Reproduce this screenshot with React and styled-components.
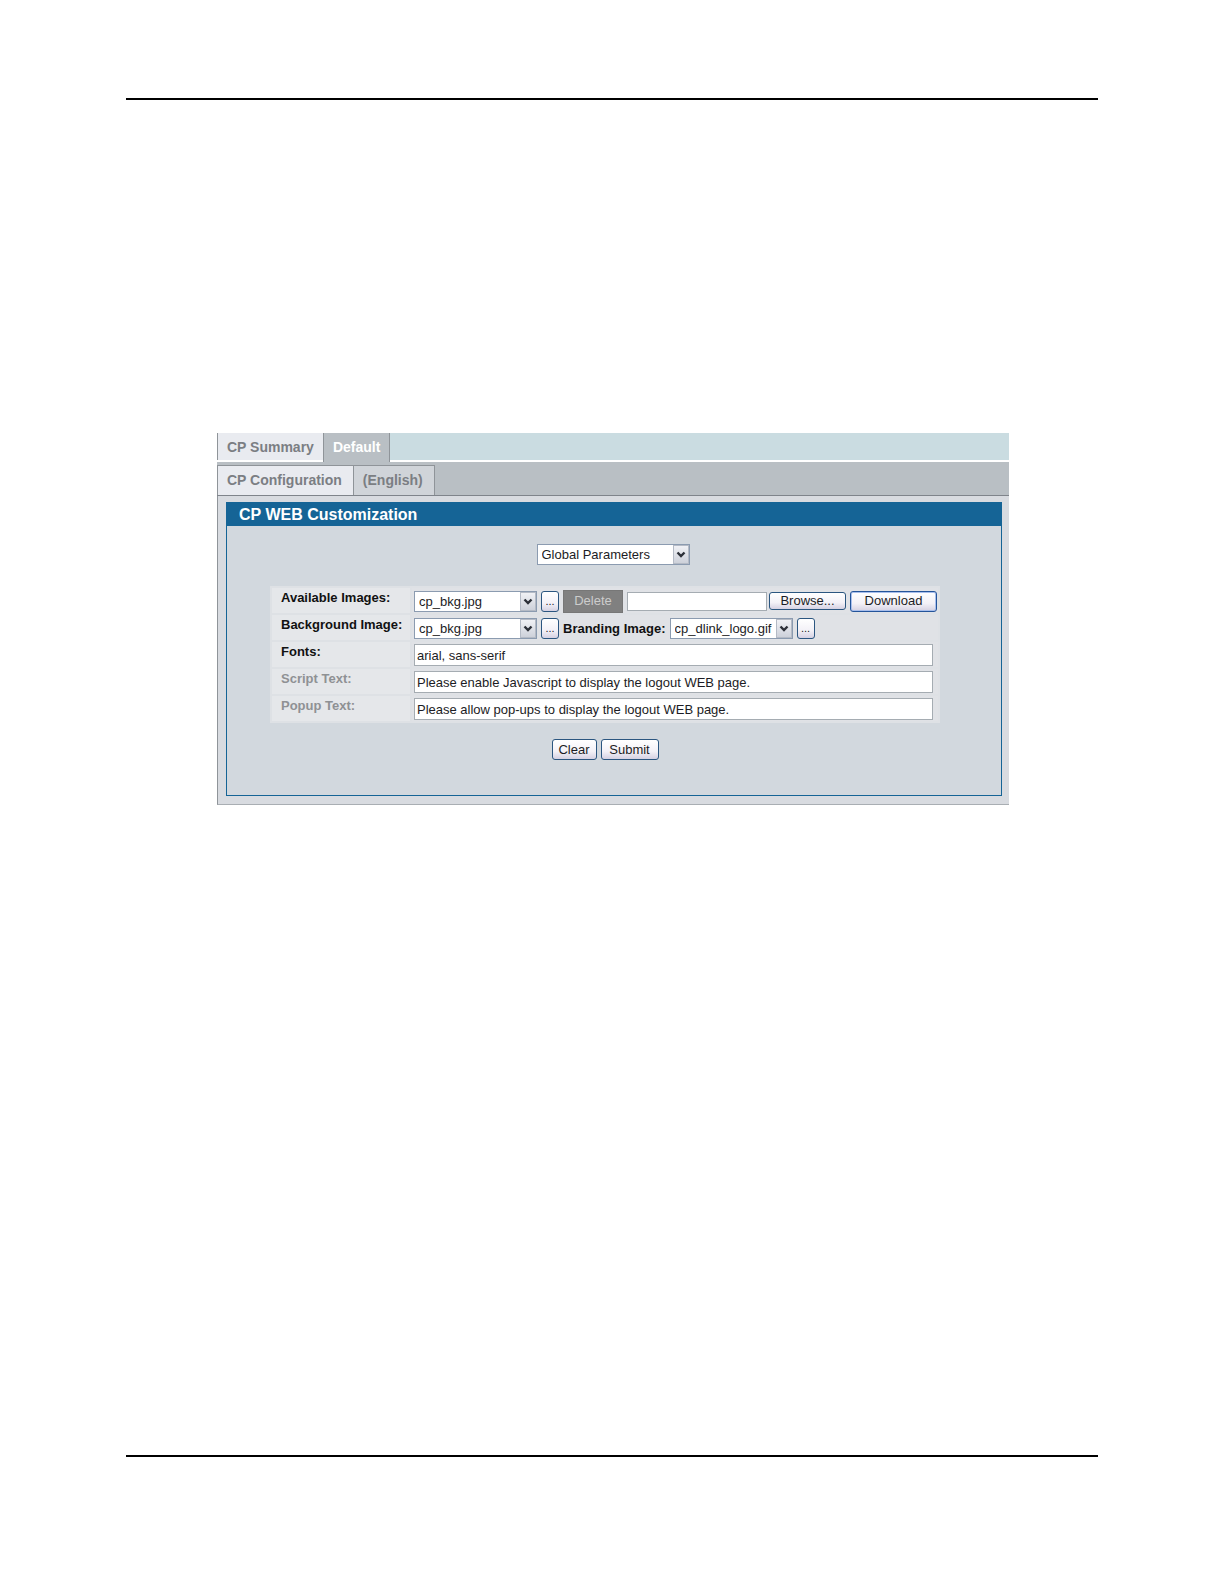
import React from "react";
import styled, { createGlobalStyle } from "styled-components";

const GlobalStyle = createGlobalStyle`
  * {
    box-sizing: border-box;
  }
  body {
    margin: 0;
    background: #fff;
    font-family: "Liberation Sans", Arial, sans-serif;
  }
  button, input, select {
    margin: 0;
    font-family: inherit;
    font-size: 13px;
    color: #1c1c24;
  }
`;

const Page = styled.div`
  display: flex;
  flex-direction: column;
  min-height: 100vh;
  padding: 98px 126px 127px;
`;
const Rule = styled.hr`
  width: 100%;
  height: 2px;
  margin: 0;
  border: 0;
  background: #000;
`;
const Screen = styled.main`
  margin: 333px 89px auto 91px;
`;

const TopTabs = styled.nav`
  display: flex;
  height: 29px;
  background: #cadce1;
  border-bottom: 2px solid #fff;
`;
const SubTabs = styled.nav`
  display: flex;
  height: 34px;
  padding-top: 3px;
  background: #b9bfc4;
  border-bottom: 1px solid #7f848b;
`;
const Tab = styled.a`
  height: ${(props) => (props.$active ? "29px" : "27px")};
  padding: 0 9px;
  border-left: 1px solid #8f9499;
  border-right: ${(props) => (props.$active ? "1px solid #8f9499" : "0")};
  background: ${(props) => (props.$active ? "#b9bfc4" : "#e9ebf0")};
  color: ${(props) => (props.$active ? "#fff" : "#7b7e83")};
  font-size: 14px;
  font-weight: bold;
  line-height: 29px;
  text-decoration: none;
`;
const SubTab = styled(Tab)`
  height: 30px;
  padding-right: 11px;
  border-top: 1px solid #8f9499;
  background: ${(props) => (props.$active ? "#d0d4d9" : "#e9ebf0")};
  color: #7b7e83;
`;

const Body = styled.div`
  padding: 6px 7px 8px 8px;
  border-left: 1px solid #8f9499;
  border-bottom: 1px solid #a9aeb3;
  background: #d8dbe0;
`;
const Panel = styled.section`
  border: 1px solid #156496;
  background: #d2d8de;
`;
const Title = styled.h1`
  margin: 0;
  padding-left: 12px;
  background: #156496;
  color: #fff;
  font-size: 16px;
  line-height: 23px;
`;
const Form = styled.form`
  padding: 18px 61px 35px 43px;
`;
const Picker = styled.div`
  display: flex;
  justify-content: center;
  padding-left: 16px;
  margin-bottom: 21px;
`;

const SelectBox = styled.span`
  display: inline-grid;
  align-items: center;
  flex: none;
  width: ${(props) => props.$width || 123}px;
  height: 21px;
  border: 1px solid #8b9bb0;
  background: #fff;
`;
const NativeSelect = styled.select`
  grid-area: 1 / 1;
  width: 100%;
  height: 19px;
  padding: 0 0 0 4px;
  border: 0;
  background: transparent;
  appearance: none;
`;
const Arrow = styled.svg`
  grid-area: 1 / 1;
  justify-self: end;
  width: 16px;
  height: 19px;
  border: 1px solid #b4bac5;
  background: linear-gradient(#f0f1f5, #cdd1da);
  pointer-events: none;
`;

const Table = styled.table`
  width: 100%;
  border-spacing: 2px;
  background: #dee1e5;
`;
const LabelCell = styled.th`
  width: 138px;
  height: 25px;
  padding: 0 0 0 9px;
  background: #e5e7ea;
  color: ${(props) => (props.$muted ? "#8f9194" : "#111")};
  font-size: 13px;
  line-height: 19px;
  text-align: left;
  vertical-align: top;
  white-space: nowrap;
`;
const Cell = styled.td`
  padding: 1px 1px 0 2px;
  background: #e0e2e6;
`;
const Line = styled.div`
  display: flex;
  align-items: center;
  gap: 4px;
`;
const FileLine = styled(Line)`
  flex: 1;
  gap: 2px;
`;
const InlineLabel = styled.label`
  color: #111;
  font-size: 13px;
  font-weight: bold;
  white-space: nowrap;
`;
const TextInput = styled.input`
  display: block;
  width: calc(100% - 4px);
  height: 22px;
  padding: 0 2px;
  border: 1px solid #a5acb2;
  background: #fff;
`;
const FileInput = styled(TextInput)`
  flex: 1;
  min-width: 0;
  height: 19px;
`;

const Button = styled.button`
  flex: none;
  width: ${(props) => props.$width}px;
  height: 21px;
  padding: 0;
  border: 1px solid #2b5680;
  border-radius: 3px;
  background: linear-gradient(#fff, #f3f1f7 60%, #d5d1e2);
  line-height: 18px;
`;
const SmallButton = styled(Button)`
  font-size: 11px;
  line-height: 16px;
`;
const BrowseButton = styled(Button)`
  height: 18px;
  line-height: 16px;
`;
const DownloadButton = styled(Button)`
  border-color: #24549a;
  box-shadow: inset 0 0 0 1px #a9bfec;
`;
const DeleteButton = styled(Button)`
  height: 23px;
  border: 1px solid #777;
  border-radius: 0;
  background: #808080;
  color: #ccc;
`;
const Actions = styled.div`
  display: flex;
  justify-content: center;
  gap: 4px;
  margin-top: 16px;
`;

const Select = ({ id, label, width, value }) => (
  <SelectBox $width={width}>
    <NativeSelect id={id} aria-label={label} defaultValue={value}>
      <option>{value}</option>
    </NativeSelect>
    <Arrow viewBox="0 0 14 17" aria-hidden="true">
      <path d="M3.5 6.5 7 10l3.5-3.5" fill="none" stroke="#2c3038" strokeWidth="2.4" />
    </Arrow>
  </SelectBox>
);

const textRows = [
  { id: "fonts", label: "Fonts:", value: "arial, sans-serif" },
  {
    id: "script",
    label: "Script Text:",
    value: "Please enable Javascript to display the logout WEB page.",
    muted: true,
  },
  {
    id: "popup",
    label: "Popup Text:",
    value: "Please allow pop-ups to display the logout WEB page.",
    muted: true,
  },
];

const App = () => {
  return (
    <Page>
      <GlobalStyle />
      <Rule />
      <Screen>
        <TopTabs>
          <Tab href="#summary">CP Summary</Tab>
          <Tab href="#default" $active>
            Default
          </Tab>
        </TopTabs>
        <SubTabs>
          <SubTab href="#configuration">CP Configuration</SubTab>
          <SubTab href="#english" $active>
            (English)
          </SubTab>
        </SubTabs>
        <Body>
          <Panel>
            <Title>CP WEB Customization</Title>
            <Form onSubmit={(e) => e.preventDefault()}>
              <Picker>
                <Select label="Page" width={153} value="Global Parameters" />
              </Picker>
              <Table>
                <tbody>
                  <tr>
                    <LabelCell scope="row">
                      <label htmlFor="images">Available Images:</label>
                    </LabelCell>
                    <Cell>
                      <Line>
                        <Select id="images" value="cp_bkg.jpg" />
                        <SmallButton type="button" $width={18}>...</SmallButton>
                        <DeleteButton type="button" $width={60}>Delete</DeleteButton>
                        <FileLine>
                          <FileInput type="text" aria-label="Image file" />
                          <BrowseButton type="button" $width={77}>Browse...</BrowseButton>
                        </FileLine>
                        <DownloadButton type="button" $width={87}>Download</DownloadButton>
                      </Line>
                    </Cell>
                  </tr>
                  <tr>
                    <LabelCell scope="row">
                      <label htmlFor="background">Background Image:</label>
                    </LabelCell>
                    <Cell>
                      <Line>
                        <Select id="background" value="cp_bkg.jpg" />
                        <SmallButton type="button" $width={18}>...</SmallButton>
                        <InlineLabel htmlFor="branding">Branding Image:</InlineLabel>
                        <Select id="branding" value="cp_dlink_logo.gif" />
                        <SmallButton type="button" $width={18}>...</SmallButton>
                      </Line>
                    </Cell>
                  </tr>
                  {textRows.map((row) => (
                    <tr key={row.id}>
                      <LabelCell scope="row" $muted={row.muted}>
                        <label htmlFor={row.id}>{row.label}</label>
                      </LabelCell>
                      <Cell>
                        <TextInput id={row.id} type="text" defaultValue={row.value} />
                      </Cell>
                    </tr>
                  ))}
                </tbody>
              </Table>
              <Actions>
                <Button type="reset" $width={45}>Clear</Button>
                <Button type="submit" $width={58}>Submit</Button>
              </Actions>
            </Form>
          </Panel>
        </Body>
      </Screen>
      <Rule />
    </Page>
  );
};
export default App;
